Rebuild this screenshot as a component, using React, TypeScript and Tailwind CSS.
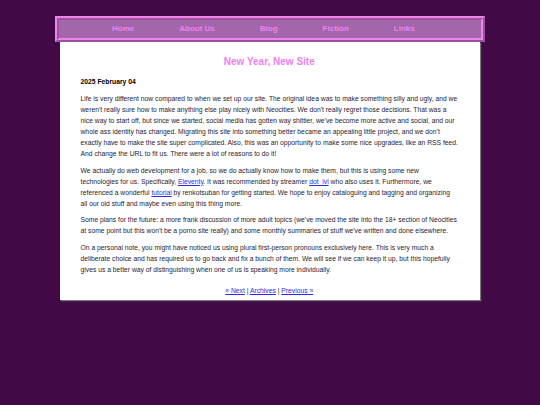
import React from "react";

const navLinks = ["Home", "About Us", "Blog", "Fiction", "Links"];

export default function App() {
  return (
    <div className="min-h-[405px] w-full bg-[#410a46] pt-[16px] font-['Liberation_Sans',Arial,sans-serif]">
      <div className="mx-auto w-[430px]">
        {/* top nav */}
        <nav className="flex h-[26px] items-center gap-[45px] border-4 border-[#ee82ee] bg-[#a366aa] pl-[53px] [border-style:ridge]">
          {navLinks.map((l) => (
            <a key={l} href="#" className="text-[8px] font-bold leading-none text-[#ee82ee]">
              {l}
            </a>
          ))}
        </nav>

        <main className="mx-auto w-[420px] bg-white pl-[20.5px] pr-[22px] pt-[14px] pb-[3.5px] text-[6.75px] leading-[11px] text-[#1f1d33] shadow-[1px_1px_1px_#777]">
          <h1 className="text-center text-[10px] font-bold leading-[12px] text-[#ef80ef]">New Year, New Site</h1>
          <h2 className="mt-[7.5px] font-bold text-black">2025 February 04</h2>

          <p className="mt-[6.5px]">
            Life is very different now compared to when we set up our site. The original idea was to make something silly and ugly, and we weren't really sure how to make anything else play nicely with Neocities. We don't really regret those decisions. That was a nice way to start off, but since we started, social media has gotten way shittier, we've become more active and social, and our whole ass identity has changed. Migrating this site into something better became an appealing little project, and we don't exactly have to make the site super complicated. Also, this was an opportunity to make some nice upgrades, like an RSS feed. And change the URL to fit us. There were a lot of reasons to do it!
          </p>
          <p className="mt-[5.7px]">
            We actually do web development for a job, so we do actually know how to make them, but this is using some new technologies for us. Specifically, <a href="#" className="text-[#2b2bf0] underline">Eleventy</a>. It was recommended by streamer <a href="#" className="text-[#2b2bf0] underline">dot_lvl</a> who also uses it. Furthermore, we referenced a wonderful <a href="#" className="text-[#2b2bf0] underline">tutorial</a> by renkotsuban for getting started. We hope to enjoy cataloguing and tagging and organizing all our old stuff and maybe even using this thing more.
          </p>
          <p className="mt-[5.7px]">
            Some plans for the future: a more frank discussion of more adult topics (we've moved the site into the 18+ section of Neocities at some point but this won't be a porno site really) and some monthly summaries of stuff we've written and done elsewhere.
          </p>
          <p className="mt-[5.7px]">
            On a personal note, you might have noticed us using plural first-person pronouns exclusively here. This is very much a deliberate choice and has required us to go back and fix a bunch of them. We will see if we can keep it up, but this hopefully gives us a better way of distinguishing when one of us is speaking more individually.
          </p>

          <p className="mt-[10px] text-center">
            <a href="#" className="text-[#2b2bf0] underline">« Next</a> | <a href="#" className="text-[#2b2bf0] underline">Archives</a> | <a href="#" className="text-[#2b2bf0] underline">Previous »</a>
          </p>
        </main>
      </div>
    </div>
  );
}
